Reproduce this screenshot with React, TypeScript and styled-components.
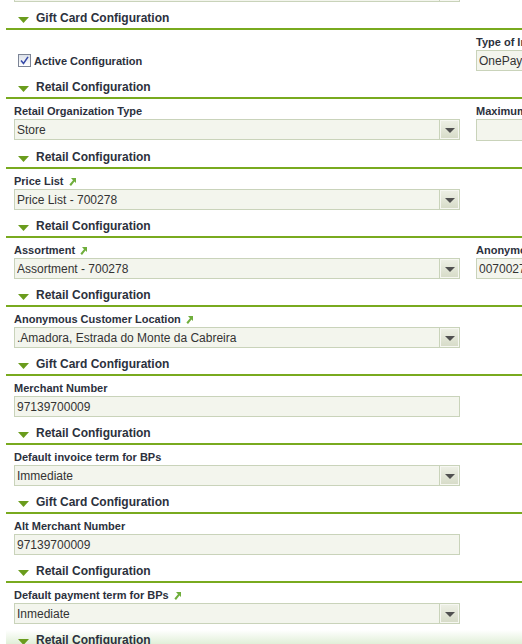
import React from 'react'
import styled, { createGlobalStyle } from 'styled-components'

const GlobalStyle = createGlobalStyle`
  html, body {
    margin: 0;
    padding: 0;
    background: #ffffff;
    overflow: hidden;
  }
  body {
    font-family: "Liberation Sans", Arial, sans-serif;
    color: #333333;
  }
`

const Page = styled.div`
  width: 940px;
  margin-top: -25px;
  padding-left: 6px;
`

const HeaderBar = styled.div<{ $active?: boolean }>`
  display: flex;
  align-items: center;
  gap: 7px;
  height: 20px;
  padding-left: 12px;
  border-bottom: 2px solid #79aa1f;
  font-size: 12px;
  font-weight: bold;
  color: #2c313d;
  background: ${(p) => (p.$active ? 'linear-gradient(#ffffff 0%, #d4e8c7 100%)' : 'transparent')};
`

const Toggle = styled.svg`
  flex: none;
  margin-top: 4px;
`

const Content = styled.div`
  display: grid;
  grid-template-columns: 446px 446px;
  align-items: start;
  column-gap: 16px;
  padding: 6px 0 6px 8px;
`

const Field = styled.div`
  display: flex;
  flex-direction: column;
  gap: 1px;
`

const Label = styled.div`
  display: flex;
  align-items: center;
  gap: 5px;
  height: 13px;
  line-height: 13px;
  font-size: 11px;
  font-weight: bold;
  color: #2c313d;
  white-space: nowrap;
`

const Box = styled.div<{ $tall?: boolean }>`
  display: flex;
  align-items: center;
  box-sizing: border-box;
  height: ${(p) => (p.$tall ? '22px' : '21px')};
  border: 1px solid #c9d3ba;
  background: #f3f5ed;
  font-size: 12px;
  color: #333333;
  padding-left: 2px;
  white-space: nowrap;
  overflow: hidden;
`

const BoxText = styled.span`
  flex: 1;
  overflow: hidden;
`

const DropButton = styled.div`
  flex: none;
  display: flex;
  align-items: center;
  justify-content: center;
  box-sizing: border-box;
  width: 20px;
  height: 19px;
  border-left: 1px solid #c9d3ba;
  background: linear-gradient(#eef0e6 0%, #d6dbc7 100%);
  box-shadow: inset 0 0 0 1px #f6f7f1;

  &::after {
    content: '';
    margin-top: 2px;
    border-top: 5px solid #505050;
    border-left: 5px solid transparent;
    border-right: 5px solid transparent;
  }
`

const CheckRow = styled.label`
  display: flex;
  align-items: center;
  gap: 3px;
  height: 21px;
  padding-left: 4px;
  font-size: 11px;
  font-weight: bold;
  color: #2c313d;
`

const CheckBox = styled.span`
  display: flex;
  align-items: center;
  justify-content: center;
  box-sizing: border-box;
  width: 13px;
  height: 13px;
  border: 1px solid #7c8496;
  background: linear-gradient(#dce1e9, #ffffff);
`

const Triangle = () => (
  <Toggle width="11" height="6" viewBox="0 0 11 6">
    <polygon points="0,0 11,0 5.5,6" fill="#6a9c1d" />
  </Toggle>
)

const LinkIcon = () => (
  <svg width="7" height="8" viewBox="0 0 7 8">
    <polygon points="2,0 7,0 7,5 5.5,3.6 2,8 0.4,6.6 4,2.3" fill="#6fae3c" />
  </svg>
)

type FieldSpec = {
  label?: string
  value?: string
  select?: boolean
  link?: boolean
  check?: boolean
  tall?: boolean
}

type SectionSpec = {
  title: string
  active?: boolean
  fields: FieldSpec[]
}

const sections: SectionSpec[] = [
  { title: 'Gift Card Configuration', fields: [{ check: true, label: 'Active Configuration' }, { label: 'Type of Integration', value: 'OnePay' }] },
  { title: 'Retail Configuration', fields: [{ label: 'Retail Organization Type', value: 'Store', select: true }, { label: 'Maximum Amount', value: '', tall: true }] },
  { title: 'Retail Configuration', fields: [{ label: 'Price List', value: 'Price List - 700278', select: true, link: true }] },
  { title: 'Retail Configuration', fields: [{ label: 'Assortment', value: 'Assortment - 700278', select: true, link: true }, { label: 'Anonymous Customer', value: '00700278' }] },
  { title: 'Retail Configuration', fields: [{ label: 'Anonymous Customer Location', value: '.Amadora, Estrada do Monte da Cabreira', select: true, link: true }] },
  { title: 'Gift Card Configuration', fields: [{ label: 'Merchant Number', value: '97139700009' }] },
  { title: 'Retail Configuration', fields: [{ label: 'Default invoice term for BPs', value: 'Immediate', select: true }] },
  { title: 'Gift Card Configuration', fields: [{ label: 'Alt Merchant Number', value: '97139700009' }] },
  { title: 'Retail Configuration', fields: [{ label: 'Default payment term for BPs', value: 'Inmediate', select: true, link: true }] },
  { title: 'Retail Configuration', active: true, fields: [] },
]

const InputField = ({ field }: { field: FieldSpec }) => {
  if (field.check) {
    return (
      <Field>
        <Label />
        <CheckRow>
          <CheckBox>
            <svg width="9" height="9" viewBox="0 0 9 9">
              <path d="M1 4.5 L3.5 7.5 L8 0.8" fill="none" stroke="#3549a8" strokeWidth="1.5" />
            </svg>
          </CheckBox>
          {field.label}
        </CheckRow>
      </Field>
    )
  }
  return (
    <Field>
      {field.label !== undefined && (
        <Label>
          {field.label}
          {field.link && <LinkIcon />}
        </Label>
      )}
      <Box $tall={field.tall}>
        <BoxText>{field.value}</BoxText>
        {field.select && <DropButton />}
      </Box>
    </Field>
  )
}

const Section = ({ section }: { section: SectionSpec }) => (
  <>
    <HeaderBar $active={section.active}>
      <Triangle />
      {section.title}
    </HeaderBar>
    {section.fields.length > 0 && (
      <Content>
        {section.fields.map((f, i) => (
          <InputField key={i} field={f} />
        ))}
      </Content>
    )}
  </>
)

export default function App() {
  return (
    <>
      <GlobalStyle />
      <Page>
        <Content>
          <InputField field={{ value: '', select: true }} />
        </Content>
        {sections.map((s, i) => (
          <Section key={i} section={s} />
        ))}
      </Page>
    </>
  )
}
